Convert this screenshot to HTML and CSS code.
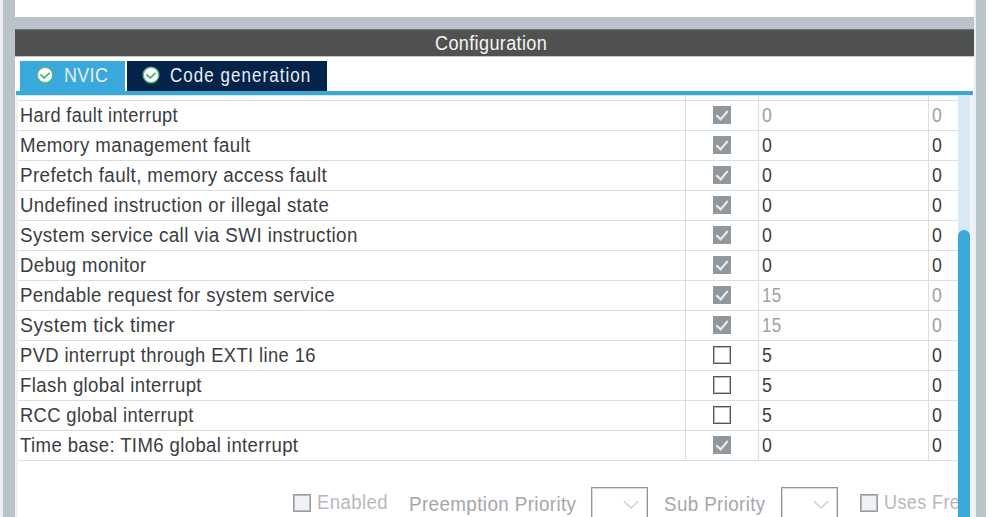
FILE: index.html
```html
<!DOCTYPE html>
<html lang="en">
<head>
<meta charset="utf-8">
<title>NVIC Configuration</title>
<link rel="stylesheet" href="styles.css">
</head>
<body>
<svg class="defs" aria-hidden="true">
  <symbol id="ok" viewBox="0 0 18 18"><circle cx="9" cy="9" r="7.8" fill="#fff" stroke="#5cb77d" stroke-width="1.5"/><path d="M4.3 8.4 8.2 12 13.7 6.9" fill="none" stroke="#4bb573" stroke-width="1.9"/></symbol>
  <symbol id="tick" viewBox="0 0 18 18"><path d="M3.3 9.3 7.6 13.4 14.7 5" fill="none" stroke="#e8ebed" stroke-width="2.2"/></symbol>
  <symbol id="down" viewBox="0 0 16 10"><path d="M1 1.2 8 8 15 1.2" fill="none" stroke="#cfcfcf" stroke-width="1.6"/></symbol>
</svg>
<div class="window">
  <div class="previous"></div>
  <main class="panel">
    <h1 class="title"><span class="fit" data-width="112">Configuration</span></h1>
    <nav class="tabs">
      <div class="tab active"><svg class="ok"><use href="#ok"/></svg><span class="fit" data-width="44">NVIC</span></div>
      <div class="tab"><svg class="ok"><use href="#ok"/></svg><span class="fit code" data-width="141">Code generation</span></div>
    </nav>
    <div class="rule"></div>
    <div class="content">
      <div class="view">
        <div class="table" id="table"><div class="row stub"><div></div><div></div><div></div><div></div></div></div>
        <div class="form">
          <span class="check off"></span><span class="fit label enabled" data-width="70.5">Enabled</span>
          <span class="fit label preemption" data-width="167">Preemption Priority</span>
          <span class="select"><svg><use href="#down"/></svg></span>
          <span class="fit label sub" data-width="102">Sub Priority</span>
          <span class="select"><svg><use href="#down"/></svg></span>
          <span class="check off uses-check"></span><span class="fit label uses" data-width="138">Uses FreeRTOS</span>
        </div>
      </div>
      <div class="scroll"><div class="thumb"></div></div>
      <div class="gutter"></div>
    </div>
  </main>
</div>
<script src="table.js"></script>
</body>
</html>
```
FILE: styles.css
```css
* { box-sizing: border-box; }
body { margin: 0; width: 1000px; height: 517px; overflow: hidden; background: linear-gradient(90deg, #f0f0f0 3px, #fff 3px); font: 19.5px/28px "Liberation Sans", Arial, sans-serif; color: #3b3c42; }
.defs { position: absolute; width: 0; height: 0; }
.window { width: 983px; height: 517px; margin-left: 3px; background: #eceff1; border-left: 12px solid #b8c4ca; border-right: 10px solid #b8c4ca; display: flex; flex-direction: column; }
.previous { width: 959px; height: 29px; flex: none; border-bottom: 12px solid #b8c4ca; background: #fff; }
.panel { flex: 1; min-height: 0; display: flex; flex-direction: column; background: #fff; width: 959px; }
.title { margin: 0; height: 28px; flex: none; background: #505250; border-bottom: 1px solid #c7c7c7; border-top: 1px solid #6d7373; color: #f5f5f5; font-size: 19.5px; font-weight: 400; line-height: 26px; display: flex; justify-content: center; padding-right: 7px; }
.fit { display: inline-block; white-space: nowrap; transform-origin: 0 50%; flex: none; letter-spacing: .4px; }
.code { letter-spacing: 1.2px; }
.tabs { height: 34px; padding: 4px 0 0 5px; display: flex; gap: 2px; flex: none; }
.tab { height: 30px; display: flex; align-items: center; background: #03234b; color: #e9edf2; width: 200px; padding: 0 0 2px 15px; }
.tab.active { width: 105px; background: #39a9dc; padding-left: 16px; }
.ok { width: 18px; height: 18px; margin-right: 10px; flex: none; }
.rule { height: 4px; width: 957px; margin-left: 1px; background: #39a9dc; flex: none; }
.content { flex: 1; min-height: 0; display: flex; padding-left: 3px; border-top: 1px solid #d9eaf3; box-shadow: inset 3px 0 #f0f1f2; }
.view { width: 940px; overflow: hidden; background: #fff; flex: none; }
.row { height: 30px; display: grid; grid-template-columns: 668px 73px 170px 29px; border-bottom: 1px solid #d9dee1; }
.row.stub { height: 5px; }
.row > div { border-right: 1px solid #d9dee1; padding-left: 2px; height: 100%; }
.row > div:last-child { border: 0; }
.row > div:nth-child(2) { padding: 5px 0 0 27px; }
.row > div:nth-child(n+3) { padding-left: 3px; }
.disabled { color: #a0a0a5; }
.check { display: block; width: 18px; height: 18px; border: 1px solid #555; outline: 1px solid #b9b9b9; outline-offset: -2px; background: #fff; flex: none; }
.check svg { display: block; width: 18px; height: 18px; }
.check.on { background: #91989d; border: 0; outline: 0; }
.check.off { border-color: #969da2; background: #f0f1f4; }
.form { height: 60px; width: 1100px; display: flex; align-items: flex-start; padding: 26px 0 0 275px; color: #a6a6ab; }
.form .check { margin-top: 7px; }
.label { line-height: 34px; }
.enabled { margin: 0 21px 0 6px; color: #b8b8bc; line-height: 31px; }
.preemption { margin-right: 15px; }
.select { width: 57px; height: 36px; border: 1px solid #8e969b; outline: 1px solid #d6dadc; outline-offset: -2px; display: flex; padding: 12px 0 0 31px; flex: none; }
.select svg { width: 16px; height: 10px; }
.sub { margin: 0 15px 0 16px; }
.uses-check { margin-left: 22px; }
.uses { margin-left: 6px; color: #b8b8bc; line-height: 31px; }
.scroll { width: 12px; background: #d9e8f5; padding-top: 134px; flex: none; overflow: hidden; }
.thumb { height: 300px; background: #39a9dc; border-radius: 6px 6px 0 0; }
.gutter { flex: 1; background: #f0f1f2; }
```
FILE: table.js
```js
const rows = [
  ['Hard fault interrupt', 158.5, true, '0', true],
  ['Memory management fault', 230.5, true, '0'],
  ['Prefetch fault, memory access fault', 307.5, true, '0'],
  ['Undefined instruction or illegal state', 309, true, '0'],
  ['System service call via SWI instruction', 337.5, true, '0'],
  ['Debug monitor', 126.5, true, '0'],
  ['Pendable request for system service', 314.5, true, '15', true],
  ['System tick timer', 155, true, '15', true],
  ['PVD interrupt through EXTI line 16', 296, false, '5'],
  ['Flash global interrupt', 182, false, '5'],
  ['RCC global interrupt', 174, false, '5'],
  ['Time base: TIM6 global interrupt', 278, true, '0']
];
const table = document.getElementById('table');
for (const [name, width, checked, priority, disabled] of rows) {
  const row = document.createElement('div');
  row.className = 'row';
  const tone = disabled ? ' class="disabled"' : '';
  row.innerHTML = `<div><span class="fit" data-width="${width}">${name}</span></div>
    <div><span class="check${checked ? ' on' : ''}">${checked ? '<svg><use href="#tick"/></svg>' : ''}</span></div>
    <div${tone}><span class="fit" data-width="${priority.length === 2 ? 20 : 10}">${priority}</span></div>
    <div${tone}><span class="fit" data-width="10">0</span></div>`;
  table.append(row);
}
// Condense each label to its intended width while keeping the letter height.
for (const label of document.querySelectorAll('.fit')) {
  const natural = label.offsetWidth;
  const width = Number(label.dataset.width);
  label.style.transform = `scaleX(${width / natural})`;
  label.style.width = `${width}px`;
}
```
